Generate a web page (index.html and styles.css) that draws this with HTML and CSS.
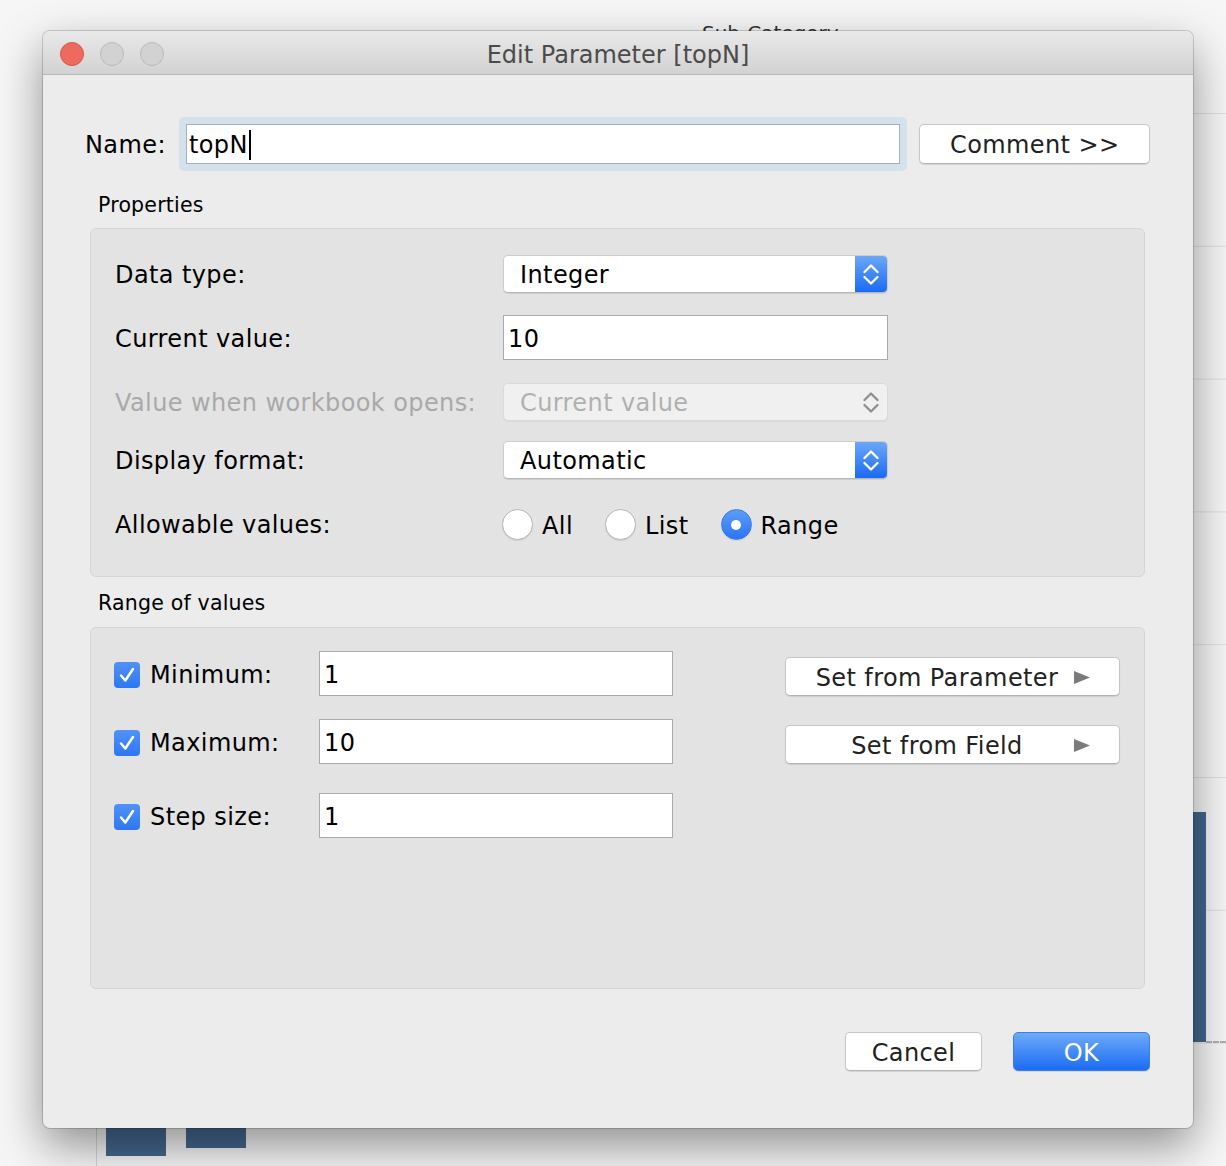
FILE: index.html
```html
<!DOCTYPE html>
<html>
<head>
<meta charset="utf-8">
<title>Edit Parameter [topN]</title>
<link rel="stylesheet" href="styles.css">
</head>
<body>
<div class="backdrop">
  <div class="grid"></div>
  <div class="sub-cat">Sub-Category</div>
  <div class="bar bar-right"></div>
  <div class="dots"></div>
  <div class="axis"></div>
  <div class="bar bar-b1"></div>
  <div class="bar bar-b2"></div>
</div>

<div class="page">
  <div class="window">
    <div class="titlebar">
      <div class="lights">
        <span class="light red"></span>
        <span class="light"></span>
        <span class="light"></span>
      </div>
      <div class="title">Edit Parameter [topN]</div>
      <div></div>
    </div>

    <div class="content">
      <div class="name-row">
        <span class="name-label">Name:</span>
        <div class="focus-ring">
          <div class="name-input">topN<span class="caret"></span></div>
        </div>
        <div class="btn comment-btn">Comment &gt;&gt;</div>
      </div>

      <div class="section-title">Properties</div>
      <div class="panel props">
        <div class="prow r1">
          <span class="plabel">Data type:</span>
          <div class="select">
            <span class="val">Integer</span>
            <span class="stepper">
              <svg width="16" height="26" viewBox="0 0 16 26"><path d="M1.5 11 L8 4.5 L14.5 11 M1.5 16 L8 22.5 L14.5 16" fill="none" stroke="#fff" stroke-width="2.3" stroke-linecap="round" stroke-linejoin="round"/></svg>
            </span>
          </div>
        </div>
        <div class="prow r2">
          <span class="plabel">Current value:</span>
          <div class="tinput">10</div>
        </div>
        <div class="prow r3">
          <span class="plabel disabled-text">Value when workbook opens:</span>
          <div class="select disabled">
            <span class="val">Current value</span>
            <span class="stepper plain">
              <svg width="16" height="26" viewBox="0 0 16 26"><path d="M1.5 11 L8 4.5 L14.5 11 M1.5 16 L8 22.5 L14.5 16" fill="none" stroke="#8f8f8f" stroke-width="2.3" stroke-linecap="round" stroke-linejoin="round"/></svg>
            </span>
          </div>
        </div>
        <div class="prow r4">
          <span class="plabel">Display format:</span>
          <div class="select">
            <span class="val">Automatic</span>
            <span class="stepper">
              <svg width="16" height="26" viewBox="0 0 16 26"><path d="M1.5 11 L8 4.5 L14.5 11 M1.5 16 L8 22.5 L14.5 16" fill="none" stroke="#fff" stroke-width="2.3" stroke-linecap="round" stroke-linejoin="round"/></svg>
            </span>
          </div>
        </div>
        <div class="prow r5">
          <span class="plabel">Allowable values:</span>
          <div class="radios">
            <div class="radio-opt"><span class="radio"></span><span>All</span></div>
            <div class="radio-opt"><span class="radio"></span><span>List</span></div>
            <div class="radio-opt"><span class="radio on"><span class="dot"></span></span><span>Range</span></div>
          </div>
        </div>
      </div>

      <div class="section-title range-title">Range of values</div>
      <div class="panel range">
        <div class="rleft">
          <div class="rrow">
            <span class="check"><svg width="26" height="26" viewBox="0 0 26 26"><path d="M7 13.5 L11.3 18.5 L19 7" fill="none" stroke="#fff" stroke-width="2.5" stroke-linecap="round" stroke-linejoin="round"/></svg></span>
            <span class="rlabel">Minimum:</span>
            <div class="rinput">1</div>
          </div>
          <div class="rrow rr2">
            <span class="check"><svg width="26" height="26" viewBox="0 0 26 26"><path d="M7 13.5 L11.3 18.5 L19 7" fill="none" stroke="#fff" stroke-width="2.5" stroke-linecap="round" stroke-linejoin="round"/></svg></span>
            <span class="rlabel">Maximum:</span>
            <div class="rinput">10</div>
          </div>
          <div class="rrow rr3">
            <span class="check"><svg width="26" height="26" viewBox="0 0 26 26"><path d="M7 13.5 L11.3 18.5 L19 7" fill="none" stroke="#fff" stroke-width="2.5" stroke-linecap="round" stroke-linejoin="round"/></svg></span>
            <span class="rlabel">Step size:</span>
            <div class="rinput">1</div>
          </div>
        </div>
        <div class="rright">
          <div class="btn setbtn"><span class="setlabel">Set from Parameter</span><svg width="16" height="13" viewBox="0 0 16 13"><polygon points="0,0 16,6.5 0,13" fill="#7b7b7b"/></svg></div>
          <div class="btn setbtn"><span class="setlabel">Set from Field</span><svg width="16" height="13" viewBox="0 0 16 13"><polygon points="0,0 16,6.5 0,13" fill="#7b7b7b"/></svg></div>
        </div>
      </div>

      <div class="footer">
        <div class="btn fbtn">Cancel</div>
        <div class="btn fbtn ok">OK</div>
      </div>
    </div>
  </div>
</div>
</body>
</html>
```

FILE: styles.css
```css
html, body {
  margin: 0;
  padding: 0;
}

body {
  width: 1226px;
  height: 1166px;
  overflow: hidden;
  position: relative;
  background: #f6f6f6;
  font-family: "DejaVu Sans", "Liberation Sans", sans-serif;
  color: #000;
}

/* ---------- background canvas (chart behind the dialog) ---------- */
.backdrop {
  position: absolute;
  inset: 0;
  z-index: 0;
}

.grid {
  position: absolute;
  left: 96px;
  right: 0;
  top: 0;
  bottom: 0;
  background-image: linear-gradient(#dfdfdf 0 1px, transparent 1px);
  background-size: 100% 132.8px;
  background-position: 0 113px;
}

.sub-cat {
  position: absolute;
  left: 702px;
  top: 21px;
  font-size: 20px;
  line-height: 24px;
  color: #333;
}

.bar {
  position: absolute;
  background: #44678f;
}

.bar-right {
  left: 1192px;
  top: 812px;
  width: 14px;
  height: 230px;
}

.dots {
  position: absolute;
  left: 1206px;
  top: 1041px;
  width: 20px;
  border-top: 2px dashed #b0b0b0;
}

.axis {
  position: absolute;
  left: 96px;
  top: 1110px;
  width: 1px;
  height: 56px;
  background: #d6d6d6;
}

.bar-b1 {
  left: 106px;
  top: 1110px;
  width: 60px;
  height: 46px;
}

.bar-b2 {
  left: 186px;
  top: 1110px;
  width: 60px;
  height: 38px;
}

/* ---------- window ---------- */
.page {
  position: relative;
  z-index: 1;
  padding: 31px 0 0 43px;
}

.window {
  width: 1150px;
  height: 1097px;
  box-sizing: border-box;
  background: #ececec;
  border-radius: 7px;
  overflow: hidden;
  box-shadow: 0 18px 46px rgba(0, 0, 0, 0.42), 0 0 0 1px rgba(0, 0, 0, 0.16);
}

.titlebar {
  height: 44px;
  box-sizing: border-box;
  padding-top: 2px;
  border-bottom: 1px solid #b7b7b7;
  background: linear-gradient(#e9e9e9, #d2d2d2);
  display: grid;
  grid-template-columns: 1fr auto 1fr;
  align-items: center;
}

.lights {
  display: flex;
  gap: 16px;
  padding-left: 17px;
}

.light {
  width: 24px;
  height: 24px;
  box-sizing: border-box;
  border-radius: 50%;
  background: #d2d2d2;
  border: 1px solid #bcbcbc;
}

.light.red {
  background: #ee6a5f;
  border-color: #d8564c;
}

.title {
  font-size: 24px;
  color: #4b4b4b;
  padding-top: 3px;
}

.content {
  padding: 42px 48px 0 47px;
  letter-spacing: 0.4px;
}

/* name row */
.name-row {
  display: flex;
  align-items: center;
  height: 54px;
  margin: 0 -5px;
  font-size: 24px;
}

.name-label {
  margin-right: 13px;
  padding-top: 2px;
}

.focus-ring {
  width: 730px;
  height: 54px;
  box-sizing: border-box;
  padding: 7px;
  background: #d4e1ed;
  border-radius: 5px;
}

.name-input {
  height: 40px;
  box-sizing: border-box;
  border: 1px solid #a2b0c1;
  background: #fff;
  padding-left: 2px;
  padding-top: 2px;
  display: flex;
  align-items: center;
}

.caret {
  display: inline-block;
  width: 2px;
  height: 30px;
  background: #000;
  margin-left: 1px;
}

.btn {
  box-sizing: border-box;
  background: #fff;
  border: 1px solid #c6c6c6;
  border-bottom-color: #b3b3b3;
  border-radius: 5px;
  box-shadow: 0 1px 1px rgba(0, 0, 0, 0.1);
  font-size: 24px;
  color: #222;
  display: flex;
  align-items: center;
  justify-content: center;
  padding-top: 2px;
}

.comment-btn {
  margin-left: 12px;
  width: 231px;
  height: 40px;
}

/* section titles */
.section-title {
  font-size: 20.5px;
  line-height: 24px;
  margin: 22px 0 11px 8px;
  letter-spacing: 0.2px;
}

.range-title {
  margin: 14px 0 12px 8px;
}

.panel {
  background: #e3e3e3;
  border: 1px solid #d6d6d6;
  border-radius: 6px;
  box-sizing: border-box;
}

/* properties */
.props {
  height: 349px;
  padding: 26px 0 0 24px;
  font-size: 24px;
}

.prow {
  display: flex;
  align-items: center;
}

.r1 { height: 38px; }
.r2 { height: 45px; margin-top: 22px; }
.r3 { height: 38px; margin-top: 23px; }
.r4 { height: 38px; margin-top: 20px; }
.r5 { height: 31px; margin-top: 29px; }

.plabel {
  width: 388px;
  flex: none;
  padding-top: 2px;
}

.disabled-text {
  color: #a9a9a9;
}

.select {
  width: 385px;
  height: 38px;
  box-sizing: border-box;
  display: flex;
  background: #fff;
  border: 1px solid #cdcdcd;
  border-bottom-color: #b7b7b7;
  border-radius: 5px;
  box-shadow: 0 1px 1px rgba(0, 0, 0, 0.1);
  overflow: hidden;
}

.select .val {
  flex: 1;
  padding-left: 16px;
  padding-top: 2px;
  display: flex;
  align-items: center;
}

.stepper {
  width: 32px;
  background: linear-gradient(#6ba7f8, #1b6bf3);
  display: flex;
  align-items: center;
  justify-content: center;
}

.select.disabled {
  background: #f0f0f0;
  border-color: #dadada;
  box-shadow: 0 1px 1px rgba(0, 0, 0, 0.05);
  color: #b0b0b0;
}

.stepper.plain {
  background: transparent;
}

.tinput {
  width: 385px;
  height: 45px;
  box-sizing: border-box;
  border: 1px solid #aaaaaa;
  background: #fff;
  padding-left: 4px;
  padding-top: 2px;
  display: flex;
  align-items: center;
}

.radios {
  display: flex;
  align-items: center;
  gap: 32px;
  margin-left: -1px;
  padding-top: 2px;
}

.radio-opt {
  display: flex;
  align-items: center;
  gap: 9px;
}

.radio-opt > span:last-child {
  padding-top: 2px;
}

.radio {
  width: 31px;
  height: 31px;
  box-sizing: border-box;
  border-radius: 50%;
  background: #fff;
  border: 1px solid #b6b6b6;
  box-shadow: 0 1px 1px rgba(0, 0, 0, 0.08);
}

.radio.on {
  background: linear-gradient(#5d9cf8, #2a76f3);
  border-color: #3a7de8;
  display: flex;
  align-items: center;
  justify-content: center;
}

.dot {
  width: 10px;
  height: 10px;
  border-radius: 50%;
  background: #fff;
}

/* range */
.range {
  height: 362px;
  padding: 23px 0 0 23px;
  display: flex;
  align-items: flex-start;
  font-size: 24px;
}

.rleft {
  display: flex;
  flex-direction: column;
}

.rrow {
  display: flex;
  align-items: center;
  height: 45px;
}

.rr2 { margin-top: 23px; }
.rr3 { margin-top: 29px; }

.check {
  width: 26px;
  height: 26px;
  border-radius: 4px;
  background: linear-gradient(#5192f8, #2e77f2);
  margin: 2px 10px 0 0;
  flex: none;
  display: flex;
}

.rlabel {
  width: 169px;
  flex: none;
  padding-top: 2px;
}

.rinput {
  width: 354px;
  height: 45px;
  box-sizing: border-box;
  border: 1px solid #aaaaaa;
  background: #fff;
  padding-left: 4px;
  padding-top: 2px;
  display: flex;
  align-items: center;
}

.rright {
  margin-left: 112px;
  padding-top: 6px;
  display: flex;
  flex-direction: column;
  gap: 29px;
}

.setbtn {
  width: 335px;
  height: 39px;
  padding-right: 29px;
  justify-content: flex-start;
}

.setlabel {
  flex: 1;
  text-align: center;
  padding-left: 14px;
}

/* footer */
.footer {
  display: flex;
  justify-content: flex-end;
  gap: 31px;
  margin: 43px -5px 0 0;
}

.fbtn {
  width: 137px;
  height: 39px;
}

.fbtn.ok {
  background: linear-gradient(#6eaaf8, #1b6cf4);
  border-color: #3b7fe6;
  color: #fff;
}
```
